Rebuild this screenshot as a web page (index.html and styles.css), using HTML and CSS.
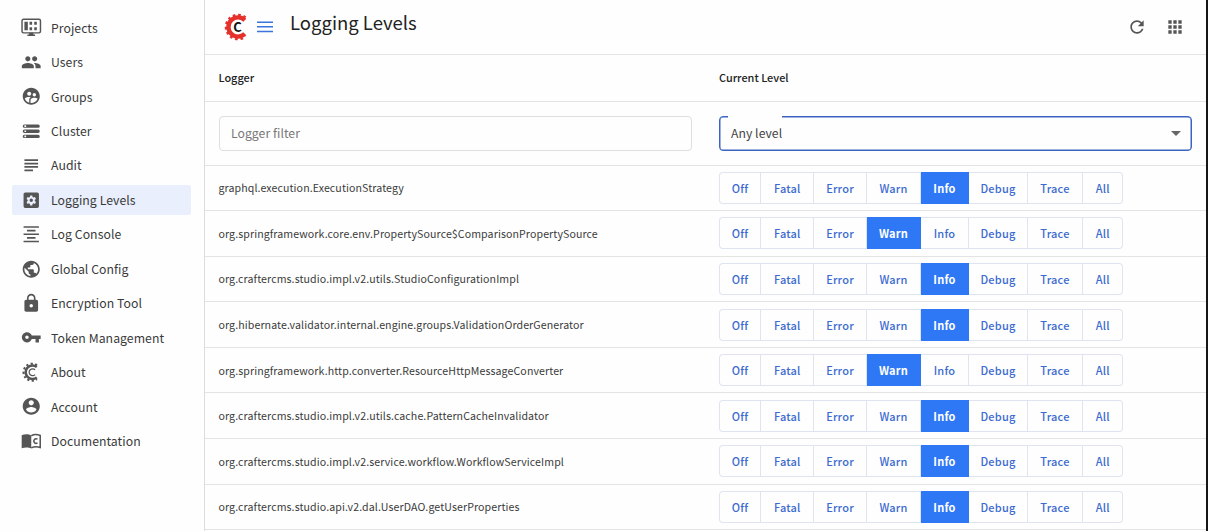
FILE: index.html
```html
<!DOCTYPE html>
<html lang="en">
<head>
<meta charset="utf-8">
<title>Logging Levels</title>
<link rel="stylesheet" href="styles.css">
</head>
<body>
<div class="app">
  <nav class="sidebar">
    <a class="nav-item"><svg viewBox="0 0 24 24"><rect x="1.2" y="2.6" width="21.6" height="16" rx="1.8" fill="none" stroke="currentColor" stroke-width="1.7"/><path d="M4 5.500h4v10H4zM10 5.500h3v3.500h-3zM15.500 5.500h3v3.500h-3zM10 12h3v3.500h-3zM15.500 12h3v3.500h-3zM9.500 18.500h5v2h2v1.800h-9v-1.800h2z"/></svg><span>Projects</span></a>
    <a class="nav-item"><svg viewBox="0 0 24 24"><path d="M16 11c1.660 0 2.990-1.340 2.990-3S17.660 5 16 5s-3 1.340-3 3 1.340 3 3 3zm-8 0c1.660 0 2.990-1.340 2.990-3S9.660 5 8 5 5 6.340 5 8s1.340 3 3 3zm0 2c-2.330 0-7 1.170-7 3.500V19h14v-2.500c0-2.330-4.670-3.500-7-3.500zm8 0c-.290 0-.620.020-.970.050 1.160.840 1.970 1.970 1.970 3.450V19h6v-2.500c0-2.330-4.670-3.500-7-3.500z"/></svg><span>Users</span></a>
    <a class="nav-item"><svg viewBox="0 0 24 24"><path d="M12 2C6.480 2 2 6.480 2 12s4.480 10 10 10 10-4.480 10-10S17.520 2 12 2zm3.610 6.340c1.070 0 1.930.860 1.930 1.930s-.860 1.930-1.930 1.930-1.930-.860-1.930-1.930.860-1.930 1.930-1.930zm-6-1.580c1.300 0 2.360 1.060 2.360 2.360s-1.060 2.360-2.360 2.360-2.360-1.060-2.360-2.360c0-1.310 1.050-2.360 2.360-2.360zm0 9.130v3.750c-2.400-.750-4.300-2.600-5.140-4.960 1.050-1.120 3.670-1.690 5.140-1.690.530 0 1.200.080 1.900.220-1.640.870-1.900 2.020-1.900 2.680zM12 20c-.270 0-.530-.010-.790-.040v-4.070c0-1.420 2.940-2.130 4.400-2.130 1.070 0 2.920.390 3.840 1.150C18.280 17.880 15.390 20 12 20z"/></svg><span>Groups</span></a>
    <a class="nav-item"><svg viewBox="0 0 24 24"><path fill-rule="evenodd" d="M4 16h16a2 2 0 0 1 2 2 2 2 0 0 1-2 2H4a2 2 0 0 1 0-4zm0 1v2h2v-2zM4 4h16a2 2 0 0 1 0 4H4a2 2 0 0 1 0-4zm0 1v2h2V5zM4 10h16a2 2 0 0 1 0 4H4a2 2 0 0 1 0-4zm0 1v2h2v-2z"/></svg><span>Cluster</span></a>
    <a class="nav-item"><svg viewBox="0 0 24 24"><path d="M4 5h16v2H4zM4 9h16v2H4zM4 13h16v2H4zM4 17h10v2H4z"/></svg><span>Audit</span></a>
    <a class="nav-item nav-item-selected"><svg viewBox="0 0 24 24"><path fill-rule="evenodd" d="M5 3h14a2 2 0 0 1 2 2v14a2 2 0 0 1-2 2H5a2 2 0 0 1-2-2V5c0-1.100.900-2 2-2zm5.800 3.500-.3 1.700-1.200.700-1.600-.650-1.250 2.150 1.400 1.100v1.500l-1.400 1.100 1.250 2.150 1.600-.650 1.200.700.300 1.700h2.400l.300-1.700 1.200-.700 1.600.650 1.250-2.150-1.400-1.100v-1.500l1.400-1.100-1.250-2.150-1.600.650-1.200-.700-.300-1.700zM12 10a2 2 0 1 1 0 4 2 2 0 0 1 0-4z"/></svg><span>Logging Levels</span></a>
    <a class="nav-item"><svg viewBox="0 0 24 24"><path d="M3 2.500h18v2H3zM7 6.800h10v2H7zM3 11h18v2H3zM7 15.200h10v2H7zM3 19.500h18v2H3z"/></svg><span>Log Console</span></a>
    <a class="nav-item"><svg viewBox="0 0 24 24"><path d="M12 2C6.480 2 2 6.480 2 12s4.480 10 10 10 10-4.480 10-10S17.520 2 12 2zm-1 17.930c-3.950-.490-7-3.850-7-7.930 0-.620.080-1.210.210-1.790L9 15v1c0 1.100.900 2 2 2v1.930zm6.900-2.540c-.260-.810-1-1.390-1.900-1.390h-1v-3c0-.550-.450-1-1-1H8v-2h2c.550 0 1-.450 1-1V7h2c1.100 0 2-.900 2-2v-.410c2.930 1.190 5 4.060 5 7.410 0 2.080-.800 3.970-2.100 5.390z"/></svg><span>Global Config</span></a>
    <a class="nav-item"><svg viewBox="0 0 24 24"><path d="M18 8h-1V6c0-2.760-2.240-5-5-5S7 3.240 7 6v2H6c-1.100 0-2 .900-2 2v10c0 1.100.900 2 2 2h12c1.100 0 2-.900 2-2V10c0-1.100-.900-2-2-2zm-6 9c-1.100 0-2-.900-2-2s.900-2 2-2 2 .900 2 2-.900 2-2 2zm3.100-9H8.900V6c0-1.710 1.390-3.100 3.100-3.100s3.100 1.390 3.100 3.100v2z"/></svg><span>Encryption Tool</span></a>
    <a class="nav-item"><svg viewBox="0 0 24 24"><path d="M12.650 10C11.830 7.670 9.610 6 7 6c-3.310 0-6 2.690-6 6s2.690 6 6 6c2.610 0 4.830-1.670 5.650-4H17v4h4v-4h2v-4H12.650zM7 14c-1.100 0-2-.900-2-2s.900-2 2-2 2 .900 2 2-.900 2-2 2z"/></svg><span>Token Management</span></a>
    <a class="nav-item"><svg viewBox="0 0 24 24"><g fill="none" stroke="currentColor"><path stroke-width="3" d="M18.500 5.800A8 8 0 1 0 18.500 18.200"/><path stroke-width="2.400" stroke-dasharray="2.500 2.700" d="M18.700 3.800A10 10 0 1 0 18.700 20.200"/><path stroke-width="1.400" d="M16.500 9.300A4 4 0 1 0 16.500 14.700"/></g></svg><span>About</span></a>
    <a class="nav-item"><svg viewBox="0 0 24 24"><path d="M12 2C6.480 2 2 6.480 2 12s4.480 10 10 10 10-4.480 10-10S17.520 2 12 2zm0 3c1.660 0 3 1.340 3 3s-1.340 3-3 3-3-1.340-3-3 1.340-3 3-3zm0 14.200c-2.500 0-4.710-1.280-6-3.220.030-1.990 4-3.080 6-3.080 1.990 0 5.970 1.090 6 3.080-1.290 1.940-3.500 3.220-6 3.220z"/></svg><span>Account</span></a>
    <a class="nav-item"><svg viewBox="0 0 24 24"><path d="M.8 5C4 3.500 9 3.300 12 5.200V20.500C9 18.800 4 18.800 .8 20.300z"/><path fill="none" stroke="currentColor" stroke-width="1.800" d="M12 5.500C15 3.900 19 3.900 22.500 5.200V19.200C19 18.300 15 18.300 12 19.800"/><path fill="none" stroke="currentColor" stroke-width="1.800" d="M19.300 9.600A2.700 2.700 0 1 0 19.300 14"/></svg><span>Documentation</span></a>
  </nav>
  <main class="content">
    <header class="toolbar">
      <svg class="logo" viewBox="0 0 24 28"><g fill="none" stroke="#e5302b"><path stroke-width="4.400" d="M20.800 7.200A9.600 9.600 0 1 0 20.800 20.800"/><path stroke-width="2.600" stroke-dasharray="2.600 2.720" d="M21.500 4.600A12 12 0 1 0 21.500 23.400"/></g><text class="logo-letter" x="13.500" y="18.700">C</text></svg>
      <svg class="menu" viewBox="0 0 16 12"><path d="M0 .5h16v1.500H0zM0 5.100h16v1.500H0zM0 9.700h16v1.500H0z"/></svg>
      <h1>Logging Levels</h1>
      <svg class="tool refresh" viewBox="0 0 24 24"><path d="M17.650 6.350C16.200 4.900 14.210 4 12 4c-4.420 0-7.990 3.580-7.990 8s3.570 8 7.990 8c3.730 0 6.840-2.550 7.730-6h-2.080c-.820 2.330-3.040 4-5.650 4-3.310 0-6-2.690-6-6s2.690-6 6-6c1.660 0 3.140.690 4.220 1.780L13 11h7V4l-2.350 2.350z"/></svg>
      <svg class="tool" viewBox="0 0 24 24"><path d="M4 8h4V4H4v4zm6 12h4v-4h-4v4zm-6 0h4v-4H4v4zm0-6h4v-4H4v4zm6 0h4v-4h-4v4zm6-10v4h4V4h-4zm-6 4h4V4h-4v4zm6 6h4v-4h-4v4zm0 6h4v-4h-4v4z"/></svg>
    </header>
    <div class="row head"><div>Logger</div><div>Current Level</div></div>
    <div class="row filters">
      <div class="field">Logger filter</div>
      <div class="field select"><span>Any level</span><svg viewBox="0 0 10 5"><path d="M0 0h10L5 5z"/></svg></div>
    </div>
    <div id="loggers"></div>
  </main>
</div>
<script src="app.js"></script>
</body>
</html>
```
FILE: styles.css
```css
* { box-sizing: border-box; }
body {
  margin: 0;
  overflow: hidden;
  background: #fefefe;
  color: #3a3a3a;
  font-family: "Noto Sans CJK SC", "Noto Sans", sans-serif;
}
.app { display: flex; width: 1208px; height: 531px; border-right: 2px solid #161616; overflow: hidden; }
.sidebar {
  flex: 0 0 205px;
  padding: 12.500px 13px 0 12px;
  border-right: 1px solid #dcdcdc;
}
.nav-item {
  display: flex;
  align-items: center;
  height: 30.450px;
  margin-bottom: 4px;
  padding-left: 9px;
  gap: 9.500px;
  border-radius: 2px;
  font-size: 12.250px;
  letter-spacing: .05px;
  white-space: nowrap;
}
.nav-item span { line-height: 20px; }
.nav-item svg { width: 20.500px; height: 20.500px; fill: currentColor; color: #555; }
.nav-item-selected { background: #e9effc; }
.content { flex: 1; min-width: 0; }
.toolbar { display: flex; align-items: center; height: 54.500px; padding: 0 21px 0 19px; border-bottom: 1px solid #e4e4e4; }
.logo { width: 24px; height: 28px; }
.logo-letter { font: bold 13px "Noto Sans CJK SC", sans-serif; text-anchor: middle; fill: #111; }
.menu { width: 16px; height: 12px; margin-left: 9px; fill: #3b74dc; }
h1 { flex: 1; margin: -9px 0 0 17px; color: #222; font-size: 18.500px; font-weight: 400; line-height: 28px; }
.tool { width: 20px; height: 20px; fill: #555; }
.refresh { margin-right: 18px; }
.row {
  display: grid;
  grid-template-columns: 473px 1fr;
  column-gap: 27.500px;
  align-items: center;
  height: 45.600px;
  padding: 0 14px 0 13.500px;
  border-bottom: 1px solid #e4e4e4;
}
.head { height: 47px; padding-bottom: 1px; color: #222; font-size: 10.900px; font-weight: 500; }
.filters { height: 64px; }
.field {
  display: flex;
  align-items: center;
  height: 35px;
  padding: 0 11.500px;
  border: 1px solid #dedede;
  border-radius: 4px;
  color: #777;
  font-size: 12.200px;
  letter-spacing: .05px;
}
.select { position: relative; justify-content: space-between; padding: 0 10px 0 11px; border-color: #3b64c0; box-shadow: inset 0 0 0 .5px #3b64c0; color: #444; }
.select::before { content: ""; position: absolute; top: -2px; left: 8px; width: 54px; height: 4px; background: #fefefe; }
.select svg { width: 10px; height: 5px; fill: #666; }
.name { font-size: 10.600px; letter-spacing: .1px; white-space: nowrap; }
.levels {
  display: grid;
  grid-template-columns: 42px 52.500px 53px 54px 48px 59px 55px 40.500px;
  width: 404px;
  height: 32px;
  border-radius: 4px;
  box-shadow: inset 0 0 0 1px #dfe4f0;
}
.level {
  display: flex;
  align-items: center;
  justify-content: center;
  padding-left: 1px;
  border-right: 1px solid #dfe4f0;
  color: #3c6bd0;
  font-size: 11px;
  font-weight: 500;
  letter-spacing: .2px;
}
.level:last-child { padding-left: 0; border-right: 0; }
.level-active { border-color: #2e78f5; background: #2e78f5; color: #fff; font-weight: 700; }
```
FILE: app.js
```js
const levels = ["Off", "Fatal", "Error", "Warn", "Info", "Debug", "Trace", "All"];
const loggers = [
  ["graphql.execution.ExecutionStrategy", "Info"],
  ["org.springframework.core.env.PropertySource$ComparisonPropertySource", "Warn"],
  ["org.craftercms.studio.impl.v2.utils.StudioConfigurationImpl", "Info"],
  ["org.hibernate.validator.internal.engine.groups.ValidationOrderGenerator", "Info"],
  ["org.springframework.http.converter.ResourceHttpMessageConverter", "Warn"],
  ["org.craftercms.studio.impl.v2.utils.cache.PatternCacheInvalidator", "Info"],
  ["org.craftercms.studio.impl.v2.service.workflow.WorkflowServiceImpl", "Info"],
  ["org.craftercms.studio.api.v2.dal.UserDAO.getUserProperties", "Info"]
];
document.getElementById("loggers").innerHTML = loggers.map(([name, current]) => `
  <div class="row">
    <div class="name">${name}</div>
    <div class="levels">${levels.map(l => `<div class="level${l === current ? " level-active" : ""}">${l}</div>`).join("")}</div>
  </div>`).join("");
```
